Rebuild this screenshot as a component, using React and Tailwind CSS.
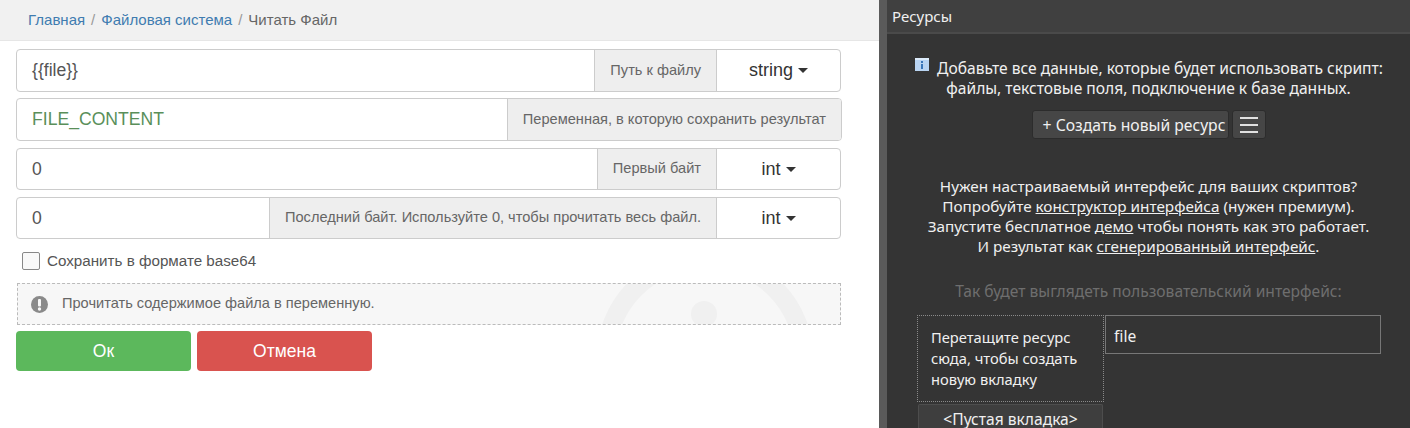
import React from 'react';

const Caret = () => <span className="inline-block ml-[5px] align-middle w-0 h-0 border-x-[5px] border-x-transparent border-t-[5px] border-t-[#333]" />;

function Row({ value, label, type, green, className }) {
    return (
        <div className={`flex border border-[#ccc] rounded-[4px] overflow-hidden bg-white ${className}`}>
            <div className={`flex-1 pl-[15px] flex items-center text-[17.6px] ${green ? 'text-[#5a8f5a]' : 'text-[#555]'}`}>{value}</div>
            <div className="bg-[#eee] border-l border-[#ccc] px-[15px] flex items-center text-[14.6px] text-[#666]">{label}</div>
            {type && (
                <div className="w-[124px] border-l border-[#ccc] flex items-center justify-center text-[18px] text-[#333]">
                    {type}<Caret />
                </div>
            )}
        </div>
    );
}

export default function App() {
    return (
        <div className="flex w-[1410px] h-[428px] overflow-hidden bg-white font-['Liberation_Sans',sans-serif]">
            <div className="w-[879px] shrink-0">
                <div className="h-[41px] bg-[#f1f1f1] border-b border-[#e6e6e6] pl-[28px] flex items-center gap-[6px] text-[15px] text-[#666]">
                    <span className="text-[#3f7cb0]">Главная</span>
                    <span className="text-[#999]">/</span>
                    <span className="text-[#3f7cb0]">Файловая система</span>
                    <span className="text-[#999]">/</span>
                    <span>Читать Файл</span>
                </div>
                <div className="pl-[16px] pr-[38px] pt-[8px]">
                    <Row className="h-[43px]" value="{{file}}" label="Путь к файлу" type="string" />
                    <Row className="h-[43px] mt-[6px] -mr-px" value="FILE_CONTENT" label="Переменная, в которую сохранить результат" green />
                    <Row className="h-[42px] mt-[7px]" value="0" label="Первый байт" type="int" />
                    <Row className="h-[42px] mt-[7px]" value="0" label="Последний байт. Используйте 0, чтобы прочитать весь файл." type="int" />
                    <label className="flex items-center mt-[13px] ml-[6px] h-[18px] text-[15.2px] text-[#555]">
                        <span className="w-[18px] h-[18px] border border-[#888] rounded-[2px] bg-[#f9f9f9]" />
                        <span className="ml-[7px]">Сохранить в формате base64</span>
                    </label>
                    <div className="relative mt-[13px] ml-px h-[42px] border border-dashed border-[#bbb] bg-[#f7f7f7] overflow-hidden flex items-center pl-[13px] text-[14.6px] text-[#666]">
                        <svg className="w-[17px] h-[17px] shrink-0" viewBox="0 0 17 17">
                            <circle cx="8.5" cy="8.5" r="8.5" fill="#8a8a8a" />
                            <rect x="7" y="3" width="3" height="7.5" rx="1" fill="#f7f7f7" />
                            <circle cx="8.5" cy="13" r="1.7" fill="#f7f7f7" />
                        </svg>
                        <span className="ml-[14px]">Прочитать содержимое файла в переменную.</span>
                        <svg className="absolute left-[582px] top-[-1px] w-[210px] h-[42px]" viewBox="0 0 210 42">
                            <circle cx="105" cy="75.6" r="99" fill="none" stroke="#f0f0f0" strokeWidth="18.7" />
                            <circle cx="104" cy="31" r="13" fill="#f0f0f0" />
                        </svg>
                    </div>
                    <div className="flex gap-[6px] mt-[6px]">
                        <button className="w-[175px] h-[40px] rounded-[4px] bg-[#5cb85c] text-white text-[17.5px]">Ок</button>
                        <button className="w-[175px] h-[40px] rounded-[4px] bg-[#d9534f] text-white text-[17.5px]">Отмена</button>
                    </div>
                </div>
            </div>

            <div className="w-[8px] shrink-0 bg-[#3a3a3a] bg-[radial-gradient(#5a5a5a_1px,transparent_1px)] bg-[length:2px_2px]" />

            <div className="flex-1 bg-[#343434] text-[#f0f0f0] text-[15.6px] leading-[20px] font-['Noto_Sans',sans-serif]">
                <div className="h-[34px] bg-[#404040] border-b-2 border-[#4a4a4a] pl-[5px] flex items-center text-[15px]">Ресурсы</div>
                <div className="flex flex-col items-center pt-[24px] text-center">
                    <div className="flex items-start gap-[7px]">
                        <svg className="w-[16px] h-[16px] -mt-px shrink-0" viewBox="0 0 16 16">
                            <rect x="1" y="1" width="14" height="13" fill="#b9d4f2" />
                            <rect x="1" y="1" width="14" height="2" fill="#dcebfa" />
                            <rect x="7" y="4" width="2" height="2" fill="#3a76b8" />
                            <rect x="7" y="7" width="2" height="5" fill="#3a76b8" />
                        </svg>
                        <span>Добавьте все данные, которые будет использовать скрипт:</span>
                    </div>
                    <div>файлы, текстовые поля, подключение к базе данных.</div>
                    <div className="flex gap-[3px] mt-[12px]">
                        <button className="w-[197px] h-[29px] rounded-[3px] bg-[#464646] border border-[#2c2c2c] text-[#f0f0f0] text-[15.7px] pl-[8px] whitespace-nowrap">+ Создать новый ресурс</button>
                        <button className="w-[34px] h-[29px] rounded-[3px] bg-[#464646] border border-[#2c2c2c] flex flex-col items-center justify-center gap-[5px]">
                            <span className="w-[18px] h-[2px] bg-[#e0e0e0]" />
                            <span className="w-[18px] h-[2px] bg-[#e0e0e0]" />
                            <span className="w-[18px] h-[2px] bg-[#e0e0e0]" />
                        </button>
                    </div>
                    <div className="mt-[37px] text-[15.3px]">Нужен настраиваемый интерфейс для ваших скриптов?</div>
                    <div className="text-[15.3px]">Попробуйте <span className="underline">конструктор интерфейса</span> (нужен премиум).</div>
                    <div className="text-[15.3px]">Запустите бесплатное <span className="underline">демо</span> чтобы понять как это работает.</div>
                    <div className="text-[15.3px]">И результат как <span className="underline">сгенерированный интерфейс</span>.</div>
                    <div className="mt-[25px] text-[#6e6e6e]">Так будет выглядеть пользовательский интерфейс:</div>
                </div>
                <div className="flex items-start mt-[14px] ml-[30px]">
                    <div>
                        <div className="w-[187px] h-[87px] border border-dotted border-[#8a8a8a] pl-[13px] flex items-center leading-[21px] text-[14.7px]">
                            <div>Перетащите ресурс<br />сюда, чтобы создать<br />новую вкладку</div>
                        </div>
                        <div className="w-[185px] h-[24px] ml-px mt-[2px] bg-[#3e3e3e] border border-b-0 border-[#4d4d4d] rounded-t-[2px] text-center pt-[6px] leading-[16px]">&lt;Пустая вкладка&gt;</div>
                    </div>
                    <div className="w-[276px] h-[39px] ml-px border border-[#777] pl-[8px] pt-[10px]">file</div>
                </div>
            </div>
        </div>
    );
}
